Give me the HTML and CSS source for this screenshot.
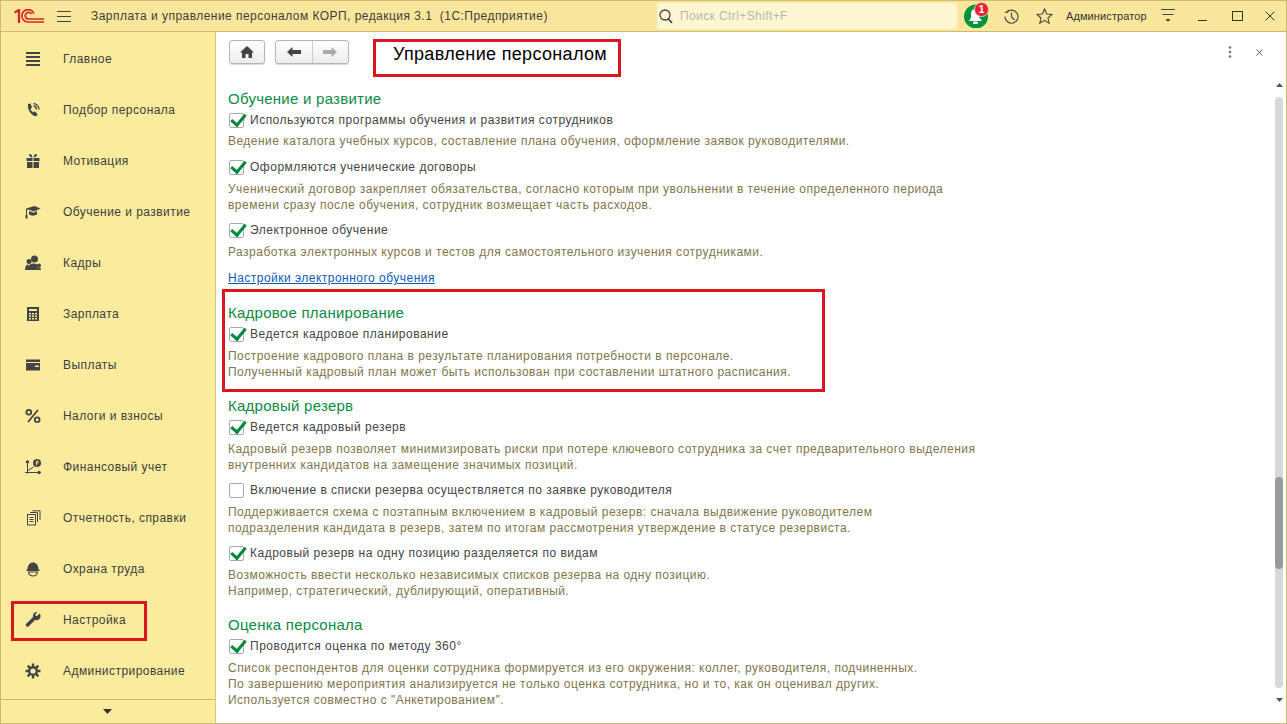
FILE: index.html
```html
<!DOCTYPE html>
<html lang="ru">
<head>
<meta charset="utf-8">
<title>Управление персоналом</title>
<link rel="stylesheet" href="styles.css">
</head>
<body>
<div class="window">
  <header class="topbar">
    <svg class="logo" width="30" height="14" viewBox="0 0 30 14" fill="none" stroke="#d9261c" stroke-width="1.700">
      <path d="M.5 3.500L5 1V14" stroke-width="2.300"/>
      <path d="M30 13H14a6.200 6.200 0 0 1 0-12.400c3 0 5 1.500 6 4"/>
      <path d="M30 10H14.500a3.300 3.300 0 0 1 0-6.600c1.400 0 2.400.6 3 1.800"/>
    </svg>
    <svg class="burger" width="14" height="11" viewBox="0 0 14 11" stroke="#444" stroke-width="1"><path d="M0 .5H14M0 5.500H14M0 10.500H14"/></svg>
    <div class="app-title">Зарплата и управление персоналом КОРП, редакция 3.1&nbsp; (1С:Предприятие)</div>
    <div class="search">
      <svg width="14" height="15" viewBox="0 0 14 15" fill="none" stroke="#444" stroke-width="1.300"><circle cx="6" cy="6" r="5"/><path d="M9.500 10L13 14" stroke-width="1.800"/></svg>
      <span>Поиск Ctrl+Shift+F</span>
    </div>
    <div class="bell">
      <svg width="24" height="24" viewBox="0 0 24 24"><circle cx="12" cy="12.500" r="12" fill="#00923f"/><path d="M11 5c3 0 4.500 2.500 4.500 5v3.500l2.500 3.500H5l2-3.500V10c0-2.500 1-5 4-5z" fill="#fff"/><rect x="9" y="17.500" width="5" height="2.500" rx="1.200" fill="#fff"/></svg>
      <span class="badge">1</span>
    </div>
    <svg class="tool-history" width="15" height="15" viewBox="0 0 15 15" fill="none" stroke="#444" stroke-width="1.100"><path d="M2.500 3.500A6.500 6.500 0 1 1 1 7.500"/><path d="M.8 3.200h3.200v-2.500" stroke-width="1"/><path d="M7.500 3.500V8l3 3"/></svg>
    <svg class="tool-star" width="17" height="16" viewBox="0 0 17 16" fill="none" stroke="#444" stroke-width="1.100"><path d="M8.500 1l2.200 5 5.300.5-4 3.500 1.200 5.200-4.700-2.800-4.700 2.800L5 10 1 6.500 6.300 6z"/></svg>
    <span class="user">Администратор</span>
    <svg class="tool-menu" width="14" height="14" viewBox="0 0 14 14"><path d="M0 .5H14M1.500 5.500H12.500" stroke="#444" fill="none"/><path d="M4.500 10H9.500L7 13z" fill="#444"/></svg>
    <svg class="win-min" width="9" height="10" viewBox="0 0 9 10"><path d="M0 9.500H9" stroke="#333" fill="none"/></svg>
    <svg class="win-max" width="11" height="10" viewBox="0 0 11 10"><rect x=".5" y=".5" width="10" height="9" fill="none" stroke="#333"/></svg>
    <svg class="win-close" width="10" height="10" viewBox="0 0 10 10"><path d="M.5 .5L9.500 9.500M9.500 .5L.5 9.500" stroke="#333" fill="none"/></svg>
  </header>
  <div class="main">
    <nav class="sidebar">
      <ul class="nav-list">
        <li class="nav-item"><svg class="nav-icon" viewBox="0 0 16 16" fill="#444"><path d="M1 1h14v2H1zM1 5h14v2H1zM1 9h14v2H1zM1 13h14v2H1z"/></svg><span>Главное</span></li>
        <li class="nav-item"><svg class="nav-icon" viewBox="0 0 16 16" fill="#444"><path d="M3 2l2.500-.5 1.500 4-1.500 1.500c.5 1.500 1 2.200 2.500 3.200l1.500-1 3 2.500-1 2.500c-4 .5-9.500-5.500-8.500-12z"/><path d="M8.500 1.500a6 6 0 0 1 5.500 6M8.500 4a3.500 3.500 0 0 1 3 3.500" fill="none" stroke="#444" stroke-width="1.300"/></svg><span>Подбор персонала</span></li>
        <li class="nav-item"><svg class="nav-icon" viewBox="0 0 16 16" fill="#444"><path d="M1.500 5h6v3h-6zM8.500 5h6v3h-6zM2 9h5.500v6H2zM8.500 9H14v6H8.500z"/><path d="M7.500 4.500C6 4.500 4 3.500 4 2s2.800-1.500 3.500 2.500zM8.500 4.500C10 4.500 12 3.500 12 2s-2.800-1.500-3.500 2.500z"/></svg><span>Мотивация</span></li>
        <li class="nav-item"><svg class="nav-icon" viewBox="0 0 16 16" fill="#444"><path d="M1 4.500L9.500 2l6 2.500L9 7.500 3 5.500 2 5.800V11H1z"/><path d="M4 7v3.500c2 1.500 5.500 1.500 8 0V7L9 8.800z"/><rect x=".5" y="11" width="2" height="3.500"/></svg><span>Обучение и развитие</span></li>
        <li class="nav-item"><svg class="nav-icon" viewBox="0 0 16 16" fill="#444"><circle cx="9.500" cy="4" r="3.500"/><path d="M2.500 15c0-4 2-6.500 6.500-6.500 2.500 0 3.500 1 4 3l-1 3.500z"/><circle cx="4" cy="6.500" r="2.500"/><path d="M0 15c0-3 1-5.500 3.500-5.500l.5 5.500z"/><circle cx="14" cy="10.500" r="2"/><path d="M12 15c0-2 1-2.500 2-2.500s2 .5 2 2.500z"/></svg><span>Кадры</span></li>
        <li class="nav-item"><svg class="nav-icon" viewBox="0 0 16 16"><path fill="#444" fill-rule="evenodd" d="M2 1h12v14H2zM4 3v2h8V3zM4 7v1.500h2V7zM7 7v1.500h2V7zM10 7v1.500h2V7zM4 9.500V11h2V9.500zM7 9.500V11h2V9.500zM10 9.500V11h2V9.500zM4 12v1.500h2V12zM7 12v1.500h2V12zM10 12v1.500h2V12z"/></svg><span>Зарплата</span></li>
        <li class="nav-item"><svg class="nav-icon" viewBox="0 0 16 16"><path fill="#444" fill-rule="evenodd" d="M1 2.500h14v11H1zM1 5v1h14V5zM10 8.500V10h4V8.500z"/></svg><span>Выплаты</span></li>
        <li class="nav-item"><svg class="nav-icon" viewBox="0 0 16 16" fill="none" stroke="#444" stroke-width="1.800"><circle cx="3.800" cy="4.300" r="2.400"/><circle cx="12.200" cy="11.700" r="2.400"/><path d="M13 2L3 14"/></svg><span>Налоги и взносы</span></li>
        <li class="nav-item"><svg class="nav-icon" viewBox="0 0 16 16" fill="none" stroke="#444"><path d="M2.500 2v12.500M0 13.500H15M2.500 1L1 3.500h3zM16 13.500L13.500 12v3z"/><path d="M3 11.500l5.500-3.500"/><circle cx="12" cy="4" r="4" fill="#444" stroke="none"/><path d="M11.500 6.500V2h1.500v2.200h-2.300" stroke="#fbec9d" stroke-width=".8"/></svg><span>Финансовый учет</span></li>
        <li class="nav-item"><svg class="nav-icon" viewBox="0 0 16 16" fill="none" stroke="#444"><rect x="2.500" y="4.500" width="8" height="10.500"/><path d="M4.500 7.500h4M4.500 9.500h4M4.500 11.500h4M5 2.500h7.500V12M7.500 .8H15v9"/></svg><span>Отчетность, справки</span></li>
        <li class="nav-item"><svg class="nav-icon" viewBox="0 0 16 16" fill="#444"><path d="M2.500 8.500C2.500 4 5 1.500 8 1.500s5.500 2.500 5.500 7h1v1.500h-13V8.500z"/><path d="M3.500 11h9c-.5 3-2.500 4-4.500 4s-4-1-4.500-4z" fill="none" stroke="#444" stroke-width="1.200"/></svg><span>Охрана труда</span></li>
        <li class="nav-item"><svg class="nav-icon" viewBox="0 0 16 16" fill="#444"><path d="M14.500 1.500l-2.500 2.500-1.500-.2-.2-1.500L12.500 0C10 -.5 7.500 1.500 8 5L1 12c-1 1.500.5 3.500 2.500 2.500L10 8c3.500 1 6-1.500 5.500-5z"/></svg><span>Настройка</span></li>
        <li class="nav-item"><svg class="nav-icon" viewBox="0 0 16 16" fill="none" stroke="#444"><circle cx="8" cy="8" r="3.800" stroke-width="2.400"/><path d="M8 .5v3M8 12.500v3M.5 8h3M12.500 8h3M2.700 2.700l2.100 2.100M11.200 11.200l2.100 2.100M13.300 2.700l-2.100 2.100M4.800 11.200l-2.100 2.100" stroke-width="2.400"/></svg><span>Администрирование</span></li>
      </ul>
      <div class="nav-more"><svg width="9" height="5" viewBox="0 0 9 5"><path d="M0 0H9L4.500 5z" fill="#333"/></svg></div>
    </nav>
    <section class="content">
      <div class="toolbar">
        <button class="btn btn-home"><svg width="14" height="12" viewBox="0 0 14 12"><path fill="#444" d="M7 0L14 6.500H12V12H8.500V8h-3v4H2V6.500H0z"/></svg></button>
        <div class="btn-group">
          <button class="btn-part"><svg width="14" height="10" viewBox="0 0 14 10"><path fill="#444" d="M0 5L5.500 0V3H14V7H5.500V10z"/></svg></button>
          <button class="btn-part"><svg width="14" height="10" viewBox="0 0 14 10"><path fill="#aaa" d="M14 5L8.500 0V3H0V7H8.500V10z"/></svg></button>
        </div>
        <h1 class="page-title">Управление персоналом</h1>
        <svg class="more" width="4" height="12" viewBox="0 0 4 12" fill="#666"><circle cx="2" cy="1.500" r="1.200"/><circle cx="2" cy="6" r="1.200"/><circle cx="2" cy="10.500" r="1.200"/></svg>
        <svg class="close" width="7" height="7" viewBox="0 0 7 7"><path d="M.5 .5L6.500 6.500M6.500 .5L.5 6.500" stroke="#555" fill="none"/></svg>
      </div>
      <div class="form">
        <h2 class="head">Обучение и развитие</h2>
        <label class="check on m1"><span class="box"></span>Используются программы обучения и развития сотрудников</label>
        <p class="desc m3">Ведение каталога учебных курсов, составление плана обучения, оформление заявок руководителями.</p>
        <label class="check on m8"><span class="box"></span>Оформляются ученические договоры</label>
        <p class="desc m4">Ученический договор закрепляет обязательства, согласно которым при увольнении в течение определенного периода<br>времени сразу после обучения, сотрудник возмещает часть расходов.</p>
        <label class="check on m7"><span class="box"></span>Электронное обучение</label>
        <p class="desc m4">Разработка электронных курсов и тестов для самостоятельного изучения сотрудниками.</p>
        <a class="link" href="#">Настройки электронного обучения</a>
        <h2 class="head m17">Кадровое планирование</h2>
        <label class="check on m1"><span class="box"></span>Ведется кадровое планирование</label>
        <p class="desc m4">Построение кадрового плана в результате планирования потребности в персонале.<br>Полученный кадровый план может быть использован при составлении штатного расписания.</p>
        <h2 class="head m16">Кадровый резерв</h2>
        <label class="check on m1"><span class="box"></span>Ведется кадровый резерв</label>
        <p class="desc m4">Кадровый резерв позволяет минимизировать риски при потере ключевого сотрудника за счет предварительного выделения<br>внутренних кандидатов на замещение значимых позиций.</p>
        <label class="check m7"><span class="box"></span>Включение в списки резерва осуществляется по заявке руководителя</label>
        <p class="desc m4">Поддерживается схема с поэтапным включением в кадровый резерв: сначала выдвижение руководителем<br>подразделения кандидата в резерв, затем по итогам рассмотрения утверждение в статусе резервиста.</p>
        <label class="check on m7"><span class="box"></span>Кадровый резерв на одну позицию разделяется по видам</label>
        <p class="desc m4">Возможность ввести несколько независимых списков резерва на одну позицию.<br>Например, стратегический, дублирующий, оперативный.</p>
        <h2 class="head m16">Оценка персонала</h2>
        <label class="check on m1"><span class="box"></span>Проводится оценка по методу 360°</label>
        <p class="desc m4">Список респондентов для оценки сотрудника формируется из его окружения: коллег, руководителя, подчиненных.<br>По завершению мероприятия анализируется не только оценка сотрудника, но и то, как он оценивал других.<br>Используется совместно с "Анкетированием".</p>
      </div>
      <div class="scrollbar">
        <svg width="7" height="4" viewBox="0 0 7 4"><path d="M0 4H7L3.500 0z" fill="#555"/></svg>
        <div class="track"><div class="thumb"></div></div>
        <svg width="7" height="4" viewBox="0 0 7 4"><path d="M0 0H7L3.500 4z" fill="#555"/></svg>
      </div>
    </section>
  </div>
  <div class="mark mark-title"></div>
  <div class="mark mark-nav"></div>
  <div class="mark mark-section"></div>
</div>
</body>
</html>
```

FILE: styles.css
```css
* { box-sizing: border-box; }
html, body { margin: 0; padding: 0; height: 100%; overflow: hidden; }
body { font-family: "Liberation Sans", Arial, sans-serif; font-size: 12px; color: #333; background: #fff; }
.window { position: relative; width: 1287px; height: 724px; border: 1px solid #c9bb6f; display: flex; flex-direction: column; overflow: hidden; }
.topbar { height: 31px; flex: none; background: #fae79b; border-bottom: 1px solid #c9bb6f; display: flex; align-items: center; padding-left: 13px; }
.logo { flex: none; }
.burger { flex: none; margin-left: 13px; }
.app-title { margin-left: 20px; width: 566px; letter-spacing: .46px; color: #3d3d3d; white-space: nowrap; }
.search { width: 300px; height: 26px; background: #fdf6d2; border-radius: 2px; display: flex; align-items: center; padding-left: 2px; gap: 7px; color: #b9b9a9; letter-spacing: .4px; }
.bell { position: relative; width: 24px; height: 24px; margin-left: 7px; flex: none; }
.badge { position: absolute; top: -2px; left: 10px; width: 15px; height: 15px; border-radius: 50%; background: #e8202a; border: 1px solid #f6c9c0; color: #fff; font-size: 11px; font-weight: bold; line-height: 13px; text-align: center; }
.tool-history { margin-left: 16px; flex: none; }
.tool-star { margin-left: 17px; flex: none; }
.user { margin-left: 13px; width: 80px; font-size: 11px; color: #333; letter-spacing: .1px; white-space: nowrap; flex: none; }
.tool-menu { margin-left: 15px; flex: none; }
.win-min { margin-left: 23px; flex: none; }
.win-max { margin-left: 25px; flex: none; }
.win-close { margin-left: 22px; flex: none; }
.main { flex: 1; display: flex; min-height: 0; }
.sidebar { width: 215px; flex: none; background: #fbec9d; border-right: 1px solid #d8cb80; display: flex; flex-direction: column; }
.nav-list { list-style: none; margin: 0; padding: 1px 0 0; flex: 1; }
.nav-item { height: 51px; display: flex; align-items: center; padding-left: 24px; font-size: 12px; letter-spacing: .45px; color: #3d3d3d; }
.nav-icon { width: 16px; height: 16px; flex: none; margin-right: 22px; }
.nav-more { height: 24px; flex: none; border-top: 1px solid #c9bb6f; padding-right: 2px; display: flex; align-items: center; justify-content: center; }
.content { position: relative; flex: 1; min-width: 0; background: #fff; }
.toolbar { height: 57px; position: relative; display: flex; align-items: flex-start; padding: 8px 0 0 13px; }
.btn, .btn-group { height: 24px; background: linear-gradient(#fff, #ececec); border: 1px solid #b5b5b5; border-radius: 3px; box-shadow: 0 1px 1px rgba(0,0,0,.15); padding: 0; }
.btn-home { width: 36px; display: flex; align-items: center; justify-content: center; }
.btn-group { margin-left: 10px; width: 74px; display: flex; }
.btn-part { flex: 1; background: none; border: 0; padding: 0; display: flex; align-items: center; justify-content: center; }
.btn-part + .btn-part { border-left: 1px solid #ccc; }
.page-title { margin: 5px 0 0 44px; font-size: 18px; font-weight: normal; color: #000; line-height: 18px; letter-spacing: .33px; white-space: nowrap; }
.more { position: absolute; top: 14px; left: 1012px; }
.close { position: absolute; top: 17px; left: 1040px; }
.form { padding-left: 12px; }
.head { margin: 0; height: 20px; line-height: 20px; font-size: 15px; font-weight: normal; color: #0a8a45; letter-spacing: .25px; }
.check { display: flex; align-items: center; height: 20px; color: #444; letter-spacing: .5px; white-space: nowrap; }
.box { position: relative; width: 15px; height: 15px; margin: 1px 6px 0 1px; border: 1px solid #a9a9a9; border-radius: 2px; background: #fff; flex: none; }
.check.on .box::after { content: ""; position: absolute; left: 4px; top: -3px; width: 6px; height: 12px; border: solid #00893d; border-width: 0 3px 3px 0; transform: rotate(40deg); }
.desc { margin: 0; line-height: 16px; color: #80764a; letter-spacing: .48px; white-space: nowrap; }
.link { display: block; margin-top: 10px; line-height: 16px; color: #0d5bb5; letter-spacing: .48px; width: max-content; }
.m1 { margin-top: 1px; }
.m3 { margin-top: 3px; }
.m4 { margin-top: 4px; }
.m7 { margin-top: 7px; }
.m8 { margin-top: 8px; }
.m16 { margin-top: 16px; }
.m17 { margin-top: 17px; }
.scrollbar { position: absolute; left: 1059px; top: 51px; width: 8px; bottom: 21px; display: flex; flex-direction: column; align-items: center; gap: 10px; }
.scrollbar svg { flex: none; }
.track { flex: 1; width: 8px; background: #d8d8d8; border-radius: 4px; position: relative; }
.thumb { position: absolute; top: 380px; height: 92px; left: 0; right: 0; background: #9a9a9a; border-radius: 4px; }
.mark { position: absolute; border: 3px solid #d9161f; pointer-events: none; }
.mark-title { left: 372px; top: 38px; width: 248px; height: 38px; }
.mark-nav { left: 10px; top: 600px; width: 136px; height: 40px; }
.mark-section { left: 221px; top: 288px; width: 603px; height: 103px; }
```
